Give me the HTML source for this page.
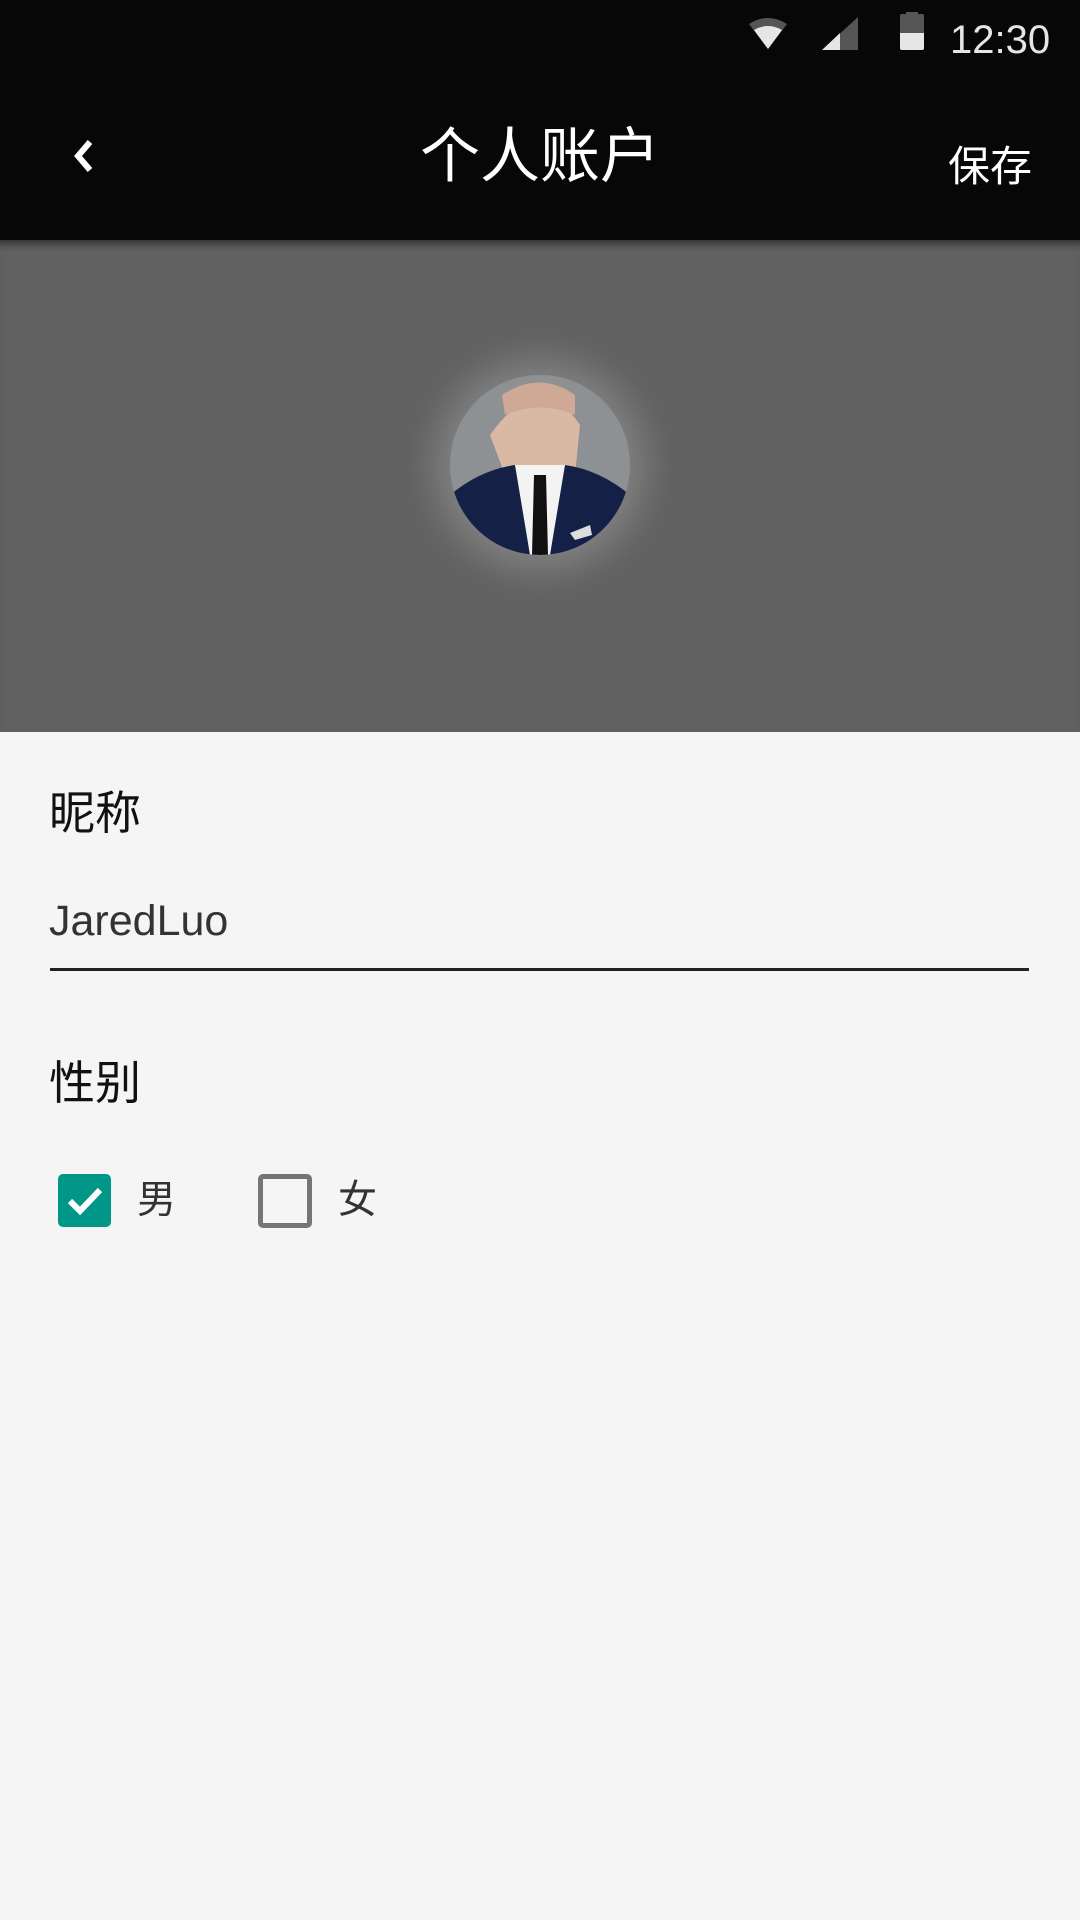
<!DOCTYPE html>
<html><head><meta charset="utf-8"><style>
*{margin:0;padding:0;box-sizing:border-box}
body{width:1080px;height:1920px;background:#f5f5f5;font-family:"Liberation Sans","Noto Sans CJK SC",sans-serif;position:relative;overflow:hidden}
.top{position:absolute;left:0;top:0;width:1080px;height:240px;background:#070707}
.gray{position:absolute;left:0;top:240px;width:1080px;height:492px;background:#616161;box-shadow:inset 0 10px 8px -6px rgba(0,0,0,.5)}
.t{position:absolute;white-space:nowrap;line-height:1}
.avatar{position:absolute;left:450px;top:375px;width:180px;height:180px;border-radius:50%;overflow:hidden;box-shadow:0 0 40px 14px rgba(200,200,200,.35);background:#8a8d8f}
</style></head><body>
<div class="top"></div>
<svg style="position:absolute;left:748px;top:16px" width="40" height="36" viewBox="0 0 40 36"><path d="M1 8 Q20 -4 39 8 L20 33 Z" fill="#555"/><path d="M6 14 Q20 6 34 14 L20 33 Z" fill="#e6e6e6"/></svg>
<svg style="position:absolute;left:822px;top:17px" width="36" height="34"><path d="M0 33 L36 0 L36 33 Z" fill="#555"/><path d="M0 33 L18 16 L18 33 Z" fill="#e6e6e6"/></svg>
<div style="position:absolute;left:900px;top:14px;width:24px;height:36px;background:#555;border-radius:2px"></div>
<div style="position:absolute;left:906px;top:12px;width:12px;height:4px;background:#555"></div>
<div style="position:absolute;left:900px;top:33px;width:24px;height:17px;background:#e6e6e6;border-radius:0 0 2px 2px"></div>
<div class="t" style="left:950px;top:20px;font-size:40px;color:#e6e6e6">12:30</div>
<svg style="position:absolute;left:70px;top:138px" width="28" height="36"><path d="M20 4 L8 18 L20 32" stroke="#fff" stroke-width="6" fill="none"/></svg>
<div class="t" style="left:0;width:1080px;text-align:center;top:127px;font-size:60px;color:#fff">个人账户</div>
<div class="t" style="left:948px;top:146px;font-size:42px;color:#fff">保存</div>
<div class="gray"></div>
<div class="avatar">
<svg width="180" height="180" viewBox="0 0 180 180">
<rect width="180" height="180" fill="#8d9193"/>
<path d="M40 60 Q90 -10 130 50 L125 100 Q90 120 55 100 Z" fill="#d9b9a4"/>
<path d="M52 20 Q90 -5 125 20 L125 40 Q90 25 55 40 Z" fill="#cfa995"/>
<path d="M0 120 Q30 95 65 90 L90 180 L0 180 Z" fill="#142046"/>
<path d="M180 120 Q150 95 115 90 L90 180 L180 180 Z" fill="#142046"/>
<path d="M65 90 L115 90 L100 180 L80 180 Z" fill="#f3f3f3"/>
<path d="M84 100 L96 100 L98 180 L82 180 Z" fill="#111"/>
<path d="M120 158 L140 150 L142 160 L125 165 Z" fill="#ddd"/>
</svg></div>
<div class="t" style="left:49px;top:790px;font-size:46px;color:#111">昵称</div>
<div class="t" style="left:49px;top:900px;font-size:43px;color:#333">JaredLuo</div>
<div style="position:absolute;left:50px;top:968px;width:979px;height:3px;background:#222"></div>
<div class="t" style="left:49px;top:1060px;font-size:46px;color:#111">性别</div>
<div style="position:absolute;left:58px;top:1174px;width:53px;height:53px;background:#009688;border-radius:5px"></div>
<svg style="position:absolute;left:58px;top:1174px" width="53" height="53"><path d="M12 27 L22 37 L42 16" stroke="#fff" stroke-width="6" fill="none"/></svg>
<div class="t" style="left:137px;top:1181px;font-size:39px;color:#333">男</div>
<div style="position:absolute;left:258px;top:1174px;width:54px;height:54px;border:5px solid #757575;border-radius:5px"></div>
<div class="t" style="left:338px;top:1181px;font-size:39px;color:#333">女</div>
</body></html>
